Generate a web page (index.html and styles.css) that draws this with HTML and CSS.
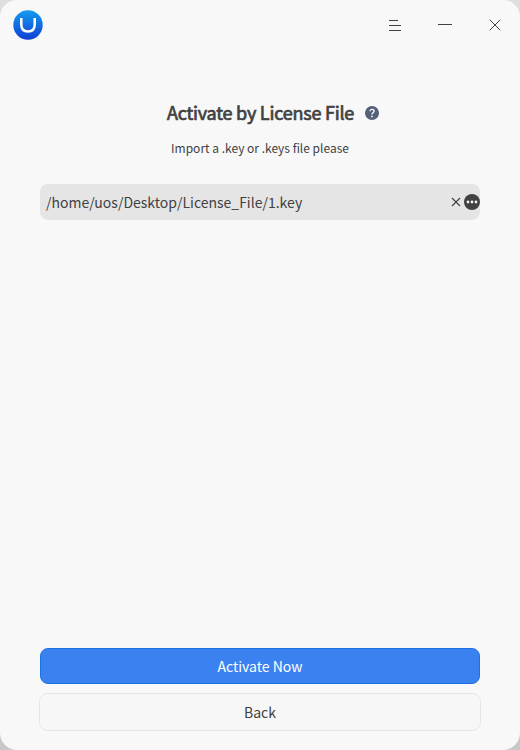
FILE: index.html
```html
<!DOCTYPE html>
<html lang="en">
<head>
<meta charset="utf-8">
<title>Activate by License File</title>
<link rel="stylesheet" href="styles.css">
</head>
<body>
<div class="window">
  <header class="titlebar">
    <svg class="logo" width="30" height="30" viewBox="0 0 30 30">
      <defs><linearGradient id="blue" x1="0" y1="0" x2="0" y2="1"><stop offset="0" stop-color="#149cf0"/><stop offset="1" stop-color="#103fd2"/></linearGradient></defs>
      <circle cx="15" cy="15" r="14.7" fill="url(#blue)"/>
      <path d="M8.300 8v6.500c0 4.600 2.700 6.900 6.700 6.900s6.700-2.300 6.700-6.900V8" fill="none" stroke="#fff" stroke-width="2.500"/>
    </svg>
    <nav class="controls">
      <button class="control" aria-label="Menu"><svg width="50" height="50" viewBox="0 0 50 50"><path d="M19 20.5h9M19 25.5h12M19 30.5h12"/></svg></button>
      <button class="control" aria-label="Minimize"><svg width="50" height="50" viewBox="0 0 50 50"><path d="M18 24.5h14"/></svg></button>
      <button class="control" aria-label="Close"><svg width="50" height="50" viewBox="0 0 50 50"><path d="M19.7 19.7l10.6 10.6M30.3 19.7L19.7 30.3"/></svg></button>
    </nav>
  </header>
  <main class="content">
    <div class="heading">
      <h1>Activate by License File</h1>
      <svg width="14" height="14" viewBox="0 0 14 14"><circle cx="7" cy="7" r="7" fill="#55607a"/><path d="M4.9 5.2C5 3.9 5.9 3.3 7 3.3s2.1.7 2.1 1.8C9.100 6.500 7 6.600 7 8.500" fill="none" stroke="#fff" stroke-width="1.300"/><circle cx="7" cy="10.400" r=".85" fill="#fff"/></svg>
    </div>
    <p class="hint">Import a .key or .keys file please</p>
    <div class="field">
      <span class="path">/home/uos/Desktop/License_File/1.key</span>
      <svg class="clear" width="10" height="10" viewBox="0 0 10 10"><path d="M1 1l8 8M9 1L1 9"/></svg>
      <svg class="browse" width="16" height="16" viewBox="0 0 16 16"><circle cx="8" cy="8" r="8" fill="#414141"/><g fill="#f2f2f2"><circle cx="4" cy="8" r="1.400"/><circle cx="8" cy="8" r="1.400"/><circle cx="12" cy="8" r="1.400"/></g></svg>
    </div>
  </main>
  <footer class="actions">
    <button class="button primary">Activate Now</button>
    <button class="button secondary">Back</button>
  </footer>
</div>
</body>
</html>
```
FILE: styles.css
```css
* { box-sizing: border-box; }
body { margin: 0; background: linear-gradient(#dedede 20px, #c8c8c8 730px); font-family: "Noto Sans CJK SC", "Noto Sans", sans-serif; color: #414141; }
.window { width: 520px; height: 750px; display: flex; flex-direction: column; background: #f8f8f8; border-radius: 17px; overflow: hidden; }
.titlebar { height: 50px; display: flex; align-items: center; justify-content: space-between; padding-left: 13px; }
.controls { display: flex; }
.control { width: 50px; height: 50px; padding: 0; border: 0; background: none; }
.control svg { display: block; fill: none; stroke: #414141; stroke-width: 1; }
.content { flex: 1; padding: 0 40px; }
.heading { display: flex; align-items: center; margin: 48px 0 0 127px; height: 30px; gap: 11px; }
h1 { margin: 0; width: 187px; font-size: 18px; line-height: 28px; height: 30px; font-weight: 400; letter-spacing: -0.22px; -webkit-text-stroke: 0.7px #414141; white-space: nowrap; }
.hint { margin: 10px 0 0; height: 20px; font-size: 12px; line-height: 20px; text-align: center; }
.field { display: flex; align-items: center; height: 36px; margin-top: 26px; padding-left: 6px; background: #e5e5e5; border-radius: 8px; }
.path { flex: 1; font-size: 14px; line-height: 36px; }
.clear { margin-right: 3px; fill: none; stroke: #414141; stroke-width: 1.1; }
.actions { display: flex; flex-direction: column; align-items: center; gap: 9px; padding-bottom: 19px; }
.button { display: block; padding: 0; font: 14px/34px "Noto Sans CJK SC", "Noto Sans", sans-serif; border-radius: 8px; }
.primary { width: 440px; height: 36px; color: #fff; background: #3b82f0; border: 1px solid #1f6fe5; }
.secondary { width: 442px; height: 38px; color: #414141; background: #f7f7f7; border: 1px solid #e5e5e5; border-radius: 9px; }
```
